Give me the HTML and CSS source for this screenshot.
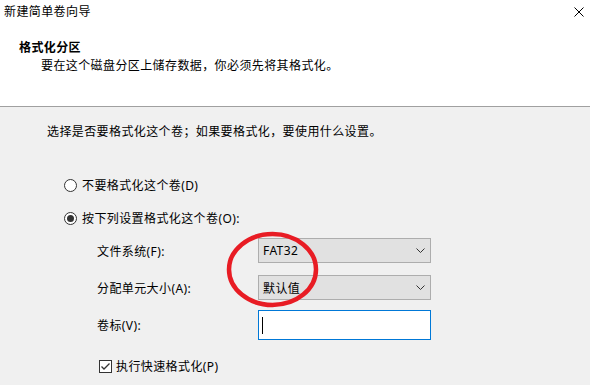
FILE: index.html
```html
<!DOCTYPE html>
<html lang="zh-CN">
<head>
    <meta charset="UTF-8">
    <meta name="viewport" content="width=device-width, initial-scale=1.0">
    <title>新建简单卷向导</title>
    <link rel="stylesheet" href="styles.css">
</head>
<body>
    <div class="window">
        <div class="header">
            <div class="titlebar">
                <span class="title">新建简单卷向导</span>
                <svg class="close" width="10" height="10" viewBox="0 0 10 10">
                    <path d="M0.5 0.5 L9.5 9.5 M9.5 0.5 L0.5 9.5" stroke="#000" stroke-width="1" fill="none"/>
                </svg>
            </div>
            <div class="heading">格式化分区</div>
            <div class="subtitle">要在这个磁盘分区上储存数据，你必须先将其格式化。</div>
        </div>

        <div class="content">
            <p class="intro">选择是否要格式化这个卷；如果要格式化，要使用什么设置。</p>

            <label class="option first">
                <span class="radio"></span>
                <span>不要格式化这个卷(D)</span>
            </label>
            <label class="option">
                <span class="radio checked"></span>
                <span>按下列设置格式化这个卷(O):</span>
            </label>

            <div class="settings">
                <div class="field">
                    <span class="label">文件系统(F):</span>
                    <div class="select">
                        <span>FAT32</span>
                        <svg width="9" height="5" viewBox="0 0 9 5"><path d="M0.5 0.5 L4.5 4.5 L8.5 0.5" stroke="#333" fill="none"/></svg>
                    </div>
                </div>
                <div class="field">
                    <span class="label">分配单元大小(A):</span>
                    <div class="select">
                        <span>默认值</span>
                        <svg width="9" height="5" viewBox="0 0 9 5"><path d="M0.5 0.5 L4.5 4.5 L8.5 0.5" stroke="#333" fill="none"/></svg>
                    </div>
                </div>
                <div class="field tall">
                    <span class="label">卷标(V):</span>
                    <div class="textbox"><span class="caret"></span></div>
                </div>
            </div>

            <label class="quick">
                <svg class="checkbox" width="13" height="13" viewBox="0 0 13 13">
                    <rect x="0.5" y="0.5" width="12" height="12" fill="#fff" stroke="#333"/>
                    <path d="M2.5 6.5 L5 9 L10.5 3.5" stroke="#333" stroke-width="1.3" fill="none"/>
                </svg>
                <span>执行快速格式化(P)</span>
            </label>
        </div>

        <svg class="mark" width="95" height="80" viewBox="0 0 95 80">
            <ellipse cx="46.5" cy="38.5" rx="43.5" ry="35.5" stroke="#e81c24" stroke-width="4.5" fill="none"/>
        </svg>
    </div>
</body>
</html>
```

FILE: styles.css
```css
* {
    box-sizing: border-box;
}

body {
    margin: 0;
    background-color: #f0f0f0;
    font-family: "Noto Sans", "Noto Sans CJK SC", sans-serif;
    font-size: 12px;
    letter-spacing: 0.4px;
    color: #000;
}

.window {
    position: relative;
    width: 590px;
    height: 385px;
    overflow: hidden;
}

.header {
    height: 107px;
    background-color: #fff;
    border-bottom: 1px solid #a0a0a0;
}

.titlebar {
    height: 24px;
    display: flex;
    align-items: center;
    justify-content: space-between;
    padding: 0 6px 0 4px;
    line-height: 16px;
}

.close {
    margin-top: 0;
}

.heading {
    margin-top: 15px;
    padding-left: 19px;
    font-weight: bold;
    line-height: 17px;
}

.subtitle {
    margin-top: 1px;
    padding-left: 41px;
    line-height: 17px;
}

.content {
    padding: 17px 0 0 47px;
}

.intro {
    margin: 0;
    line-height: 16px;
}

.option {
    display: flex;
    align-items: center;
    height: 20px;
    padding-left: 17px;
    gap: 5px;
    margin-top: 13px;
}

.option.first {
    margin-top: 35px;
}

.radio {
    width: 13px;
    height: 13px;
    border: 1px solid #333;
    border-radius: 50%;
    background-color: #fff;
    display: flex;
    align-items: center;
    justify-content: center;
}

.radio.checked::after {
    content: "";
    width: 7px;
    height: 7px;
    border-radius: 50%;
    background-color: #333;
}

.settings {
    margin-top: 10px;
    padding-left: 50px;
    display: flex;
    flex-direction: column;
    gap: 12px;
}

.field {
    display: flex;
    align-items: center;
    height: 25px;
}

.field.tall {
    height: 30px;
    margin-top: -2px;
}

.label {
    width: 161px;
}

.select {
    width: 173px;
    height: 25px;
    background-color: #e1e1e1;
    border: 1px solid #adadad;
    display: flex;
    align-items: center;
    justify-content: space-between;
    padding: 0 5px 0 4px;
}

.textbox {
    width: 173px;
    height: 30px;
    background-color: #fff;
    border: 1px solid #0078d7;
    display: flex;
    align-items: center;
    padding-left: 3px;
}

.caret {
    width: 1px;
    height: 17px;
    background-color: #000;
}

.quick {
    display: flex;
    align-items: center;
    gap: 4px;
    height: 16px;
    margin-top: 18px;
    padding-left: 52px;
}

.mark {
    position: absolute;
    left: 226px;
    top: 231px;
}
```
